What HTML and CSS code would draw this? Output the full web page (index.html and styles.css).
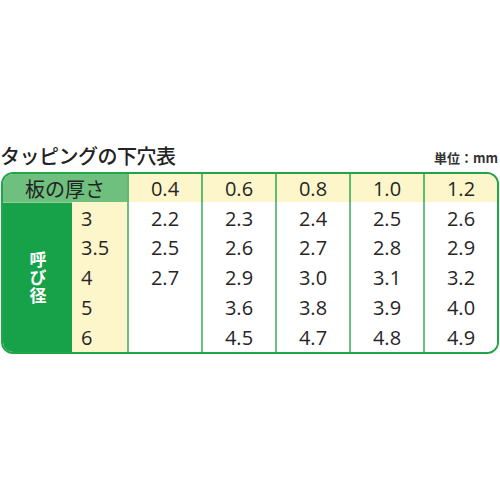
FILE: index.html
```html
<!DOCTYPE html>
<html lang="ja">
<head>
<meta charset="utf-8">
<link rel="stylesheet" href="styles.css">
</head>
<body>
<div class="page">
  <div class="titlebar">
    <div class="title">タッピングの下穴表</div>
    <div class="unit">単位：mm</div>
  </div>
  <div class="table">
    <div class="hcell corner">板の厚さ</div>
    <div class="hcell num">0.4</div>
    <div class="hcell num">0.6</div>
    <div class="hcell num">0.8</div>
    <div class="hcell num">1.0</div>
    <div class="hcell num">1.2</div>

    <div class="label"><span>呼び径</span></div>

    <div class="size r1">3</div>
    <div class="cell first">2.2</div><div class="cell">2.3</div><div class="cell">2.4</div><div class="cell">2.5</div><div class="cell">2.6</div>

    <div class="size">3.5</div>
    <div class="cell first">2.5</div><div class="cell">2.6</div><div class="cell">2.7</div><div class="cell">2.8</div><div class="cell">2.9</div>

    <div class="size">4</div>
    <div class="cell first">2.7</div><div class="cell">2.9</div><div class="cell">3.0</div><div class="cell">3.1</div><div class="cell">3.2</div>

    <div class="size">5</div>
    <div class="cell first"></div><div class="cell">3.6</div><div class="cell">3.8</div><div class="cell">3.9</div><div class="cell">4.0</div>

    <div class="size last">6</div>
    <div class="cell first"></div><div class="cell">4.5</div><div class="cell">4.7</div><div class="cell">4.8</div><div class="cell">4.9</div>
  </div>
</div>
</body>
</html>
```
FILE: styles.css
```css
html, body {
  margin: 0;
  padding: 0;
  background: #ffffff;
}
.page {
  width: 500px;
  height: 500px;
  padding-top: 143px;
  box-sizing: border-box;
  font-family: "Noto Sans CJK JP", "Noto Sans", sans-serif;
  color: #2a2a2a;
}
.titlebar {
  display: flex;
  justify-content: space-between;
  align-items: flex-end;
  height: 26px;
  padding: 0 2px 0 0;
}
.title {
  font-size: 20px;
  line-height: 26px;
  font-weight: 500;
  letter-spacing: -0.5px;
  color: #222;
}
.unit {
  font-size: 13px;
  line-height: 20px;
  font-weight: 700;
  color: #333;
  padding-bottom: 1px;
}
.table {
  margin: 3px 0 0 1px;
  width: 498px;
  box-sizing: border-box;
  border: 2px solid #22a548;
  border-radius: 12px;
  overflow: hidden;
  display: grid;
  grid-template-columns: 69px 55px repeat(5, 74px);
  grid-template-rows: 28px repeat(5, 30px);
}
.hcell {
  background: #fdf6cb;
  border-left: 2px solid #5fba72;
  border-bottom: 1px solid #8fd09c;
  display: flex;
  align-items: center;
  justify-content: center;
  font-size: 20px;
  font-weight: 400;
  color: #2a2a2a;
  box-sizing: border-box;
  height: 29px;
  margin-bottom: -1px;
}
.hcell.corner {
  grid-column: span 2;
  border-left: none;
  background: #6fbf7e;
  color: #222;
  font-size: 20px;
}
.num, .size, .cell {
  font-family: "Open Sans", "DejaVu Sans", sans-serif;
  font-weight: 400;
  font-size: 20px;
  color: #262626;
}
.label {
  grid-row: 2 / span 5;
  grid-column: 1;
  background: #17a24a;
  display: flex;
  align-items: center;
  justify-content: center;
  margin-top: 1px;
}
.label span {
  writing-mode: vertical-rl;
  color: #ffffff;
  font-weight: 700;
  font-size: 17px;
  letter-spacing: 1px;
  margin-left: 1px;
}
.size {
  grid-column: 2;
  background: #fdf6cb;
  display: flex;
  align-items: center;
  padding-left: 9px;
}
.size.r1 {
  padding-top: 2px;
}
.cell {
  border-left: 2px solid #6cbf80;
  display: flex;
  align-items: center;
  justify-content: center;
  background: #fff;
}
.r1 ~ .cell:nth-child(-n+13) {
  padding-top: 2px;
}
```
